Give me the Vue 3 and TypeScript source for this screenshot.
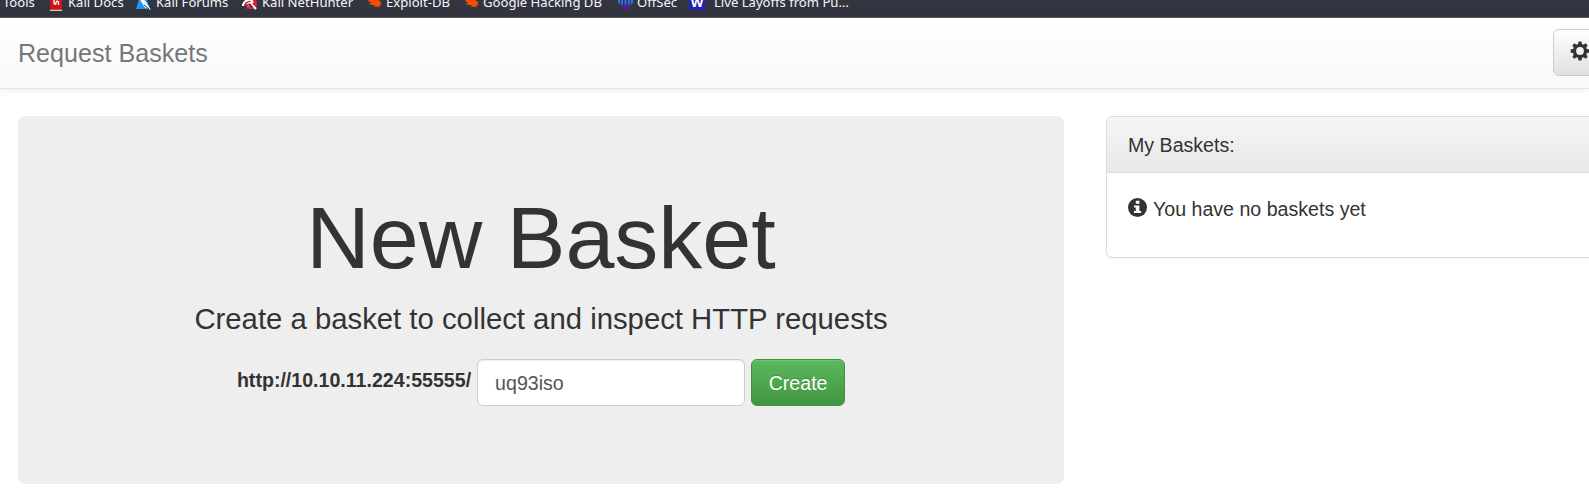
<script setup lang="ts">
import { ref } from 'vue'

interface Bookmark {
  icon: 'docs' | 'forums' | 'hunter' | 'spider' | 'offsec' | 'word'
  label: string
}

const bookmarks: Bookmark[] = [
  { icon: 'docs', label: 'Kali Docs' },
  { icon: 'forums', label: 'Kali Forums' },
  { icon: 'hunter', label: 'Kali NetHunter' },
  { icon: 'spider', label: 'Exploit-DB' },
  { icon: 'spider', label: 'Google Hacking DB' },
  { icon: 'offsec', label: 'OffSec' },
  { icon: 'word', label: 'Live Layoffs from Pu…' },
]

const basketName = ref('uq93iso')
</script>

<template>
  <div class="page">
    <div class="bookmarks">
      <span class="bookmark">Tools</span>
      <span v-for="b in bookmarks" :key="b.label" class="bookmark" :class="b.icon">
        <svg v-if="b.icon === 'docs'" width="14" height="17" viewBox="0 0 14 17">
          <path d="M1 0h12v16H1z" fill="#d01318" />
          <path d="M1 15.7h12V17H1z" fill="#d9c9cb" />
          <path d="M5 6v3.5q1.6 1.5 2 0V8q1-1.500 2.500 0v3" fill="none" stroke="#fff" stroke-width="1.3" />
        </svg>
        <svg v-else-if="b.icon === 'forums'" width="16" height="16" viewBox="0 0 16 16">
          <path d="M3 5h8l3 10H0z" fill="#2494f3" />
          <path d="M4 5c3 0 6 1 7 5l4 6-7-3C8 10 5 9 4 5z" fill="#fff" />
          <path d="M11 5l3 7M8 11l5 4" stroke="#26384c" stroke-width="1" />
        </svg>
        <svg v-else-if="b.icon === 'hunter'" width="16" height="16" viewBox="0 0 16 16">
          <path d="M5 5h9l1 5-1 5H8L2 14z" fill="#dc2038" />
          <path d="M1 12c0-5 7-8 9-5s-6 1-4 5M8 9l6 6" fill="none" stroke="#fff" stroke-width="2.2" />
          <path d="M2 14c2-1 3-4 6-4l3 4" stroke="#242630" stroke-width="1.2" fill="none" />
        </svg>
        <svg v-else-if="b.icon === 'spider'" width="15" height="16" viewBox="0 0 15 16">
          <path d="M2 4h7l2 3 3 1-2 1 2 2-2.500 0 1 2-2-1 0 1.500-2-1-3 .5 1.700-1.500L0 10l3.500-1L0 7z" fill="#fc4c08" />
        </svg>
        <svg v-else-if="b.icon === 'offsec'" width="15" height="16" viewBox="0 0 15 16">
          <defs>
            <linearGradient id="offsec-fade" x1="0" y1="0" x2="0" y2="1">
              <stop offset=".3" stop-color="#2878dc" />
              <stop offset=".7" stop-color="#7a00e8" />
            </linearGradient>
          </defs>
          <path d="M0 5h2v6L0 9zM3 5h2v9l-2-2zM6.500 5h2v10l-1 1-1-1zM10 5h2v7l-2 2zM13 5h2v4l-2 2z" fill="url(#offsec-fade)" />
        </svg>
        <span v-else class="word-mark">W</span>
        <span class="label">{{ b.label }}</span>
      </span>
    </div>

    <nav class="navbar">
      <a class="brand">Request Baskets</a>
      <button class="settings" type="button" aria-label="Settings">
        <svg width="20" height="20" viewBox="-10 -10 20 20">
          <g fill="#333">
            <path
              fill-rule="evenodd"
              d="M0-7.200A7.200 7.200 0 1 1 0 7.200A7.200 7.200 0 1 1 0-7.200ZM0-3.900A3.900 3.900 0 1 0 0 3.900A3.900 3.900 0 1 0 0-3.900Z"
            />
            <path
              v-for="n in 8"
              :key="n"
              d="M-2.200-6.400L-1.400-9.400H1.400L2.200-6.400Z"
              :transform="`rotate(${n * 45})`"
            />
          </g>
        </svg>
      </button>
    </nav>

    <main class="content">
      <section class="jumbotron">
        <h1>New Basket</h1>
        <p>Create a basket to collect and inspect HTTP requests</p>
        <form class="create" @submit.prevent>
          <label for="basket">http://10.10.11.224:55555/</label>
          <input id="basket" v-model="basketName" type="text" spellcheck="false" />
          <button type="submit">Create</button>
        </form>
      </section>

      <aside class="panel">
        <header>My Baskets:</header>
        <div class="panel-body">
          <svg width="20" height="20" viewBox="0 0 20 20">
            <circle cx="9.500" cy="9.500" r="9.500" fill="#333" />
            <path d="M7.800 2.800h3.600v2.900H7.800zM6 7.600h5.400v5.500h1.700v2H6v-2h1.800V9.600H6z" fill="#fff" />
          </svg>
          <span>You have no baskets yet</span>
        </div>
      </aside>
    </main>
  </div>
</template>

<style>
body {
  margin: 0;
  overflow: hidden;
  background: #fff;
}
</style>

<style scoped>
.page {
  width: 1589px;
  height: 502px;
  overflow: hidden;
  color: #333;
  font: 19.6px/28px "Liberation Sans", Arial, sans-serif;
}
.page * {
  box-sizing: border-box;
}
.bookmarks {
  display: grid;
  grid-template-columns: 46px 87px 106px 126px 97px 153px 71px auto;
  height: 18px;
  padding-left: 3px;
  overflow: hidden;
  background: #32343f;
  border-bottom: 1px solid #5a5b64;
  color: #f6f6fa;
  font: 13.1px/18px "Noto Sans", sans-serif;
}
.bookmark {
  display: flex;
  gap: 4px;
  height: 18px;
  margin-top: -7px;
  white-space: nowrap;
}
.bookmark svg {
  flex: none;
}
.bookmark:not(.word) svg {
  margin-top: 1px;
}
.docs {
  gap: 5px;
}
.docs svg {
  height: 17px;
}
.spider .label {
  margin-left: -1px;
}
.word {
  gap: 9px;
}
.word-mark {
  width: 16px;
  height: 17px;
  background: #2122b0;
  color: #fff;
  font-weight: 700;
  line-height: 18px;
  text-align: center;
}
.navbar {
  display: flex;
  justify-content: space-between;
  height: 71px;
  padding: 11px 0 0 18px;
  background: linear-gradient(#fff, #f8f8f8);
  border-bottom: 1px solid #e5e5e5;
  box-shadow: 0 1px 7px rgba(0, 0, 0, 0.08);
}
.brand {
  color: #777;
  font-size: 25.1px;
  line-height: 48px;
}
.settings {
  flex: none;
  display: flex;
  align-items: center;
  width: 56px;
  height: 47px;
  margin-right: -20px;
  padding: 0 0 3px 16px;
  border: 1px solid #ccc;
  border-radius: 6px;
  background: linear-gradient(#fff, #e0e0e0);
}
.content {
  display: grid;
  grid-template-columns: 1046px 525px;
  gap: 42px;
  align-items: start;
  padding: 27px 0 0 18px;
}
.jumbotron {
  height: 368px;
  padding-top: 69px;
  border-radius: 8px;
  background: #eee;
  text-align: center;
}
h1 {
  margin: 0;
  font-size: 88px;
  font-weight: 400;
  line-height: 106px;
}
.jumbotron p {
  margin: 11px 0 23px;
  font-size: 29.3px;
  line-height: 34px;
}
.create {
  display: flex;
  justify-content: center;
  gap: 6px;
}
.create label {
  font-weight: 700;
  line-height: 42px;
}
.create input {
  width: 268px;
  height: 47px;
  padding: 2px 17px 0;
  border: 1px solid #ccc;
  border-radius: 6px;
  outline: none;
  background: #fff;
  box-shadow: inset 0 1px 1px rgba(0, 0, 0, 0.075);
  color: #555;
  font: inherit;
}
.create button {
  width: 94px;
  height: 47px;
  padding: 0;
  border: 1px solid #3e8f3e;
  border-radius: 6px;
  background: linear-gradient(#5cb85c, #419641);
  box-shadow: inset 0 1px 0 rgba(255, 255, 255, 0.15);
  color: #fff;
  font: inherit;
  text-shadow: 0 -1px 0 rgba(0, 0, 0, 0.2);
}
.panel {
  height: 142px;
  border: 1px solid #ddd;
  border-radius: 6px;
  box-shadow: 0 1px 2px rgba(0, 0, 0, 0.05);
}
.panel header {
  height: 56px;
  padding: 14px 21px;
  border-bottom: 1px solid #ddd;
  border-radius: 5px 5px 0 0;
  background: linear-gradient(#f5f5f5, #e8e8e8);
}
.panel-body {
  display: flex;
  gap: 5px;
  padding: 22px 21px;
}
.panel-body svg {
  flex: none;
  margin-top: 3px;
}
</style>
